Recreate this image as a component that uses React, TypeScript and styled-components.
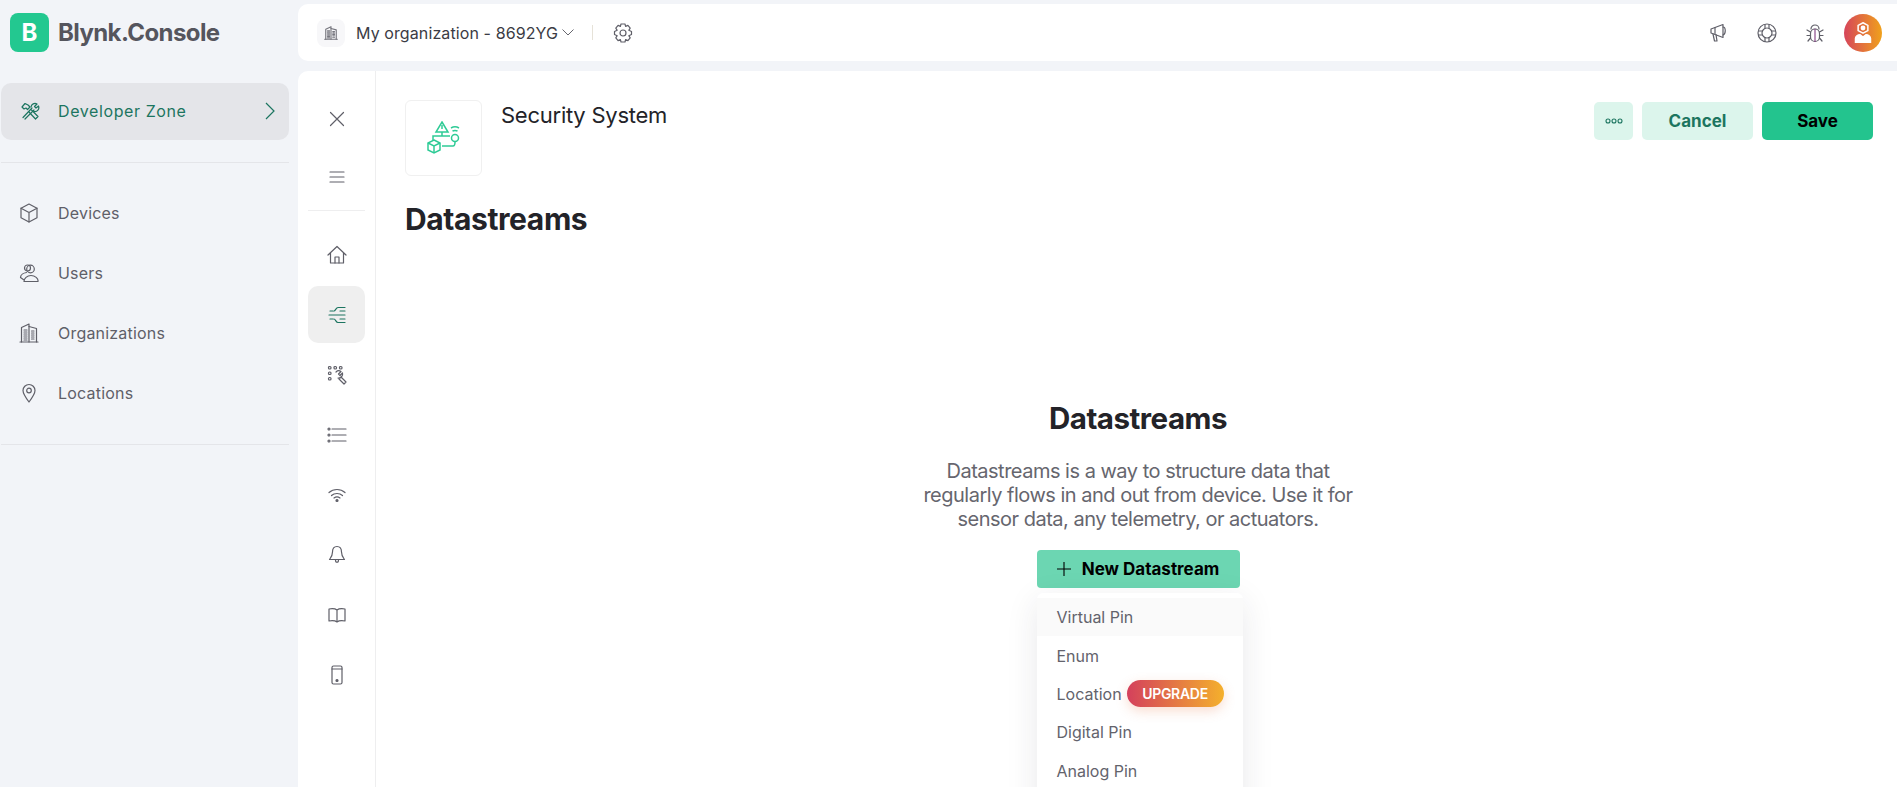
import React from "react";
import styled, { createGlobalStyle } from "styled-components";

const Global = createGlobalStyle`
  html, body { margin: 0; padding: 0; height: 100%; overflow: hidden; background: #f2f4f8; }
  body { font-family: Inter, "Liberation Sans", sans-serif; color: #232328; }
  #root { height: 100%; }
  * { box-sizing: border-box; }
`;

const Page = styled.div`
  display: flex;
  width: 1897px;
  height: 787px;
  overflow: hidden;
`;
const Sidebar = styled.aside`
  width: 298px;
  flex: none;
  display: flex;
  flex-direction: column;
`;
const Brand = styled.div`
  display: flex;
  align-items: center;
  gap: 9px;
  height: 39px;
  margin: 13px 0 31px 10px;
`;
const BrandMark = styled.div`
  width: 39px;
  height: 39px;
  border-radius: 8px;
  background: #23c890;
  color: #fff;
  font-size: 24px;
  font-weight: 700;
  display: flex;
  align-items: center;
  justify-content: center;
`;
const BrandName = styled.div`
  font-size: 24px;
  font-weight: 700;
  letter-spacing: -0.6px;
  color: #55555d;
`;
const ZoneRow = styled.div`
  margin-left: 1px;
  width: 288px;
  height: 57px;
  border-radius: 10px;
  background: #e4e5e9;
  display: flex;
  align-items: center;
  padding: 0 13px 2px 19px;
  gap: 18px;
  color: #1c7560;
  font-size: 16px;
  font-weight: 400;
  letter-spacing: 0.6px;
  span { flex: 1; }
`;
const SideRule = styled.div<{ $top: number }>`
  margin: ${(p) => p.$top}px 9px 0 1px;
  height: 1px;
  background: #e4e5e9;
`;
const SideList = styled.nav`
  display: flex;
  flex-direction: column;
  margin-top: 20px;
`;
const SideItem = styled.div`
  height: 60px;
  display: flex;
  align-items: center;
  padding-left: 19px;
  gap: 19px;
  font-size: 16px;
  letter-spacing: 0.2px;
  color: #5f5f68;
`;
const Right = styled.div`
  flex: 1;
  min-width: 0;
  display: flex;
  flex-direction: column;
  padding-top: 4px;
  gap: 10px;
`;
const TopBar = styled.header`
  height: 57px;
  flex: none;
  background: #fff;
  border-radius: 10px 0 0 10px;
  display: flex;
  align-items: center;
  padding: 0 15px 0 19px;
`;
const OrgBadge = styled.div`
  width: 28px;
  height: 28px;
  border-radius: 8px;
  background: #f7f7f9;
  display: flex;
  align-items: center;
  justify-content: center;
  margin-right: 11px;
`;
const OrgName = styled.div`
  font-size: 16px;
  color: #3b3b44;
  letter-spacing: 0.1px;
`;
const Pipe = styled.div`
  width: 1px;
  height: 15px;
  background: #e6e2d8;
  margin: 0 20px 0 18px;
`;
const TopActions = styled.div`
  margin-left: auto;
  display: flex;
  align-items: center;
  gap: 28px;
`;
const Avatar = styled.div`
  width: 38px;
  height: 38px;
  border-radius: 50%;
  background: linear-gradient(90deg, #d6455a, #f0a11c);
  display: flex;
  align-items: center;
  justify-content: center;
  margin-left: -9px;
`;
const Panel = styled.main`
  flex: 1;
  min-height: 0;
  background: #fff;
  border-radius: 10px 0 0 0;
  display: flex;
`;
const Rail = styled.div`
  width: 78px;
  flex: none;
  border-right: 1px solid #eeeeef;
  display: flex;
  flex-direction: column;
  align-items: center;
  padding-top: 19px;
`;
const RailTop = styled.div`
  width: 57px;
  height: 58px;
  display: flex;
  align-items: center;
  justify-content: center;
`;
const RailRule = styled.div`
  width: 57px;
  height: 1px;
  background: #eeeeef;
  margin: 4px 0 15px;
`;
const RailItem = styled.div<{ $active?: boolean }>`
  width: 57px;
  height: 57px;
  margin-bottom: 3px;
  flex: none;
  border-radius: 10px;
  background: ${(p) => (p.$active ? "#efefef" : "transparent")};
  display: flex;
  align-items: center;
  justify-content: center;
`;
const Content = styled.div`
  flex: 1;
  min-width: 0;
  padding: 29px 24px 0 29px;
  display: flex;
  flex-direction: column;
`;
const HeadRow = styled.div`
  display: flex;
  align-items: flex-start;
`;
const Tile = styled.div`
  width: 77px;
  height: 76px;
  border: 1px solid #f0f0f0;
  border-radius: 6px;
  display: flex;
  align-items: center;
  justify-content: center;
  margin-right: 19px;
`;
const ProductName = styled.div`
  font-size: 22px;
  line-height: 24px;
  letter-spacing: -0.25px;
  margin-top: 3px;
  color: #232328;
  flex: 1;
`;
const Actions = styled.div`
  display: flex;
  gap: 9px;
  margin-top: 2px;
`;
const Btn = styled.button<{ $kind: "soft" | "solid" | "more" }>`
  width: ${(p) => (p.$kind === "more" ? "39px" : "111px")};
  height: 38px;
  border: 0;
  border-radius: 5px;
  font-family: inherit;
  font-size: 17px;
  font-weight: 700;
  display: flex;
  align-items: center;
  justify-content: center;
  background: ${(p) => (p.$kind === "solid" ? "#23c48e" : "#dcf5ec")};
  color: ${(p) => (p.$kind === "solid" ? "#000" : "#1c7560")};
`;
const PageTitle = styled.h1`
  margin: 25px 0 0;
  font-size: 30px;
  line-height: 36px;
  font-weight: 700;
  color: #232328;
  letter-spacing: -0.4px;
`;
const Empty = styled.section`
  margin-top: 163px;
  display: flex;
  flex-direction: column;
  align-items: center;
  padding-right: 2px;
`;
const EmptyTitle = styled.h2`
  margin: 0;
  font-size: 29.5px;
  line-height: 36px;
  font-weight: 700;
  color: #232328;
  letter-spacing: -0.5px;
`;
const EmptyText = styled.p`
  margin: 23px 0 0;
  width: 440px;
  font-size: 20px;
  line-height: 24px;
  letter-spacing: -0.5px;
  text-align: center;
  color: #66666e;
`;
const AddWrap = styled.div`
  position: relative;
  margin-top: 19px;
`;
const AddBtn = styled.button`
  width: 203px;
  height: 38px;
  border: 0;
  border-radius: 4px;
  background: #6cd6b2;
  font-family: inherit;
  font-size: 17px;
  font-weight: 700;
  color: #000;
  display: flex;
  align-items: center;
  justify-content: center;
  gap: 11px;
`;
const Menu = styled.div`
  position: absolute;
  top: 43px;
  left: 0;
  width: 206px;
  height: 240px;
  padding-top: 5px;
  background: #fff;
  border-radius: 6px;
  box-shadow: 0 8px 32px rgba(40, 40, 60, 0.1);
`;
const MenuItem = styled.div<{ $hover?: boolean }>`
  height: 38.4px;
  display: flex;
  align-items: center;
  padding-left: 20px;
  font-size: 16px;
  color: #63636c;
  background: ${(p) => (p.$hover ? "#fafafa" : "#fff")};
`;
const Upgrade = styled.span`
  position: absolute;
  left: 90px;
  top: 87px;
  width: 97px;
  height: 27px;
  border-radius: 14px;
  background: linear-gradient(90deg, #d4405c, #f4b02c);
  box-shadow: 0 4px 12px rgba(230, 120, 70, 0.25);
  color: #fff;
  font-size: 14px;
  font-weight: 600;
  letter-spacing: -0.3px;
  display: flex;
  align-items: center;
  justify-content: center;
`;

const Ico: React.FC<{ s?: number; c?: string; w?: number; children: React.ReactNode }> = ({ s = 20, c = "#5f5f68", w = 1.2, children }) => (
  <svg width={s} height={s} viewBox="0 0 20 20" fill="none" stroke={c} strokeWidth={w} strokeLinecap="round" strokeLinejoin="round">
    {children}
  </svg>
);

const buildingIcon = (
  <>
    <path d="M1 19h18" />
    <path d="M2.500 19V4.500L10 1v18" />
    <path d="M10 3.500l7.500 2V19" />
    <path d="M5 7h3M5 9h3M5 11h3M5 13h3M5 15h3M5 17h3M12.500 8h2.500M12.500 10h2.500M12.500 12h2.500M12.500 14h2.500M12.500 16h2.500" />
  </>
);

export default function App() {
  return (
    <Page>
      <Global />
      <Sidebar>
        <Brand>
          <BrandMark>B</BrandMark>
          <BrandName>Blynk.Console</BrandName>
        </Brand>
        <ZoneRow>
          <Ico c="#1c7560">
            <path d="M3 16.500L12 7M5 18l9-9" />
            <path d="M11 6a4 4 0 0 1 6-3l-2.500 2.500 1.500 1.500L18.500 5a4 4 0 0 1-4.500 5.500" />
            <path d="M2 6l3-3.500 3 1.500 2 2-2.500 2.500L6 7 4 8z" />
            <path d="M9 11l6.500 7 2.500-2.500L11.500 9" />
          </Ico>
          <span>Developer Zone</span>
          <svg width="12" height="18" viewBox="0 0 12 18" fill="none" stroke="#1c7560" strokeWidth="1.200"><path d="M2 1l8 8-8 8" /></svg>
        </ZoneRow>
        <SideRule $top={22} />
        <SideList>
          <SideItem>
            <Ico>
              <path d="M10 1l8 4.200v9.600L10 19l-8-4.200V5.200z" />
              <path d="M2 5.200l8 4.300 8-4.300M10 9.500V19" />
            </Ico>
            Devices
          </SideItem>
          <SideItem>
            <Ico>
              <circle cx="11.500" cy="6" r="3.800" />
              <circle cx="8.500" cy="5" r="3" />
              <path d="M1.500 14.500c0-2.500 3-4.500 6-5M5 18.500h14c.5-3-3-6-7-6s-7 3-7 6zM1.500 14.500L5 17" />
            </Ico>
            Users
          </SideItem>
          <SideItem>
            <Ico>{buildingIcon}</Ico>
            Organizations
          </SideItem>
          <SideItem>
            <Ico>
              <path d="M10 19c-3-4-6-8-6-11.500a6 6 0 0 1 12 0C16 11 13 15 10 19z" />
              <circle cx="10" cy="7.500" r="2.300" />
            </Ico>
            Locations
          </SideItem>
        </SideList>
        <SideRule $top={21} />
      </Sidebar>
      <Right>
        <TopBar>
          <OrgBadge>
            <Ico s={14} c="#77777f" w={1.600}>{buildingIcon}</Ico>
          </OrgBadge>
          <OrgName>My organization - 8692YG</OrgName>
          <svg style={{ marginLeft: 4 }} width="12" height="7" viewBox="0 0 12 7" fill="none" stroke="#66666e" strokeWidth="1"><path d="M.5.500L6 6 11.500.500" /></svg>
          <Pipe />
          <Ico>
            <path d="M8 1h4l.6 2.400 2.300-1 2.300 2.800-1.400 2.100 2.700 1.200v3l-2.700 1.200 1.400 2.100-2.300 2.800-2.300-1L12 19H8l-.6-2.400-2.300 1-2.300-2.800 1.400-2.100L1.500 11.500v-3l2.700-1.200L2.800 5.200l2.300-2.800 2.300 1z" />
            <circle cx="10" cy="10" r="3" />
          </Ico>
          <TopActions>
            <Ico>
              <path d="M2 6l12-4.500v13L2 10z" />
              <path d="M14 4c3 0 3 7 0 8M4 11l1.500 7h2.500L7 11.500" />
              <path d="M6 4.500v6" />
            </Ico>
            <Ico>
              <circle cx="10" cy="10" r="9" />
              <circle cx="10" cy="10" r="5" />
              <path d="M8 1.500v4M12 1.500v4M8 14.500v4M12 14.500v4M1.500 8h4M1.500 12h4M14.500 8h4M14.500 12h4" />
            </Ico>
            <Ico>
              <path d="M6 6a4 4 0 0 1 8 0" />
              <rect x="5.500" y="6" width="9" height="12.500" rx="4.500" />
              <path d="M10 6v12.500" stroke="#8a4a8a" />
              <path d="M5.500 9L2 7M5.500 12.500H2M5.500 15L3 18M14.500 9L18 7M14.500 12.500H18M14.500 15l2.500 3" />
            </Ico>
            <Avatar>
              <svg width="18" height="21" viewBox="0 0 24 28" fill="none" stroke="#fff" strokeWidth="2">
                <path d="M12 1l6.500 3.500v7L12 15l-6.500-3.500v-7z" />
                <circle cx="12" cy="8" r="2.200" fill="#fff" />
                <path d="M2 27v-5c0-3 3-5 6-5l4 3 4-3c3 0 6 2 6 5v5z" fill="#fff" />
              </svg>
            </Avatar>
          </TopActions>
        </TopBar>
        <Panel>
          <Rail>
            <RailTop>
              <Ico>
                <path d="M3.500 3.500l13 13M16.500 3.500l-13 13" />
              </Ico>
            </RailTop>
            <RailTop>
              <Ico>
                <path d="M3 5h14M3 10h14M3 15h14" />
              </Ico>
            </RailTop>
            <RailRule />
            <RailItem>
              <Ico>
                <path d="M1 10L10 1.500 19 10M3.500 8V18h13V8" />
                <path d="M8 18v-6h4v6" />
              </Ico>
            </RailItem>
            <RailItem $active>
              <Ico c="#1c7560">
                <path d="M2 10h16M11 2.500h7M11 17.500h7M7 6c1.500 0 2-3.500 4-3.500M7 14c1.500 0 2 3.500 4 3.500M3 6h3M3 14h3M13 6h5M13 14h5" />
              </Ico>
            </RailItem>
            <RailItem>
              <Ico>
                <rect x="1.500" y="1.500" width="2.500" height="2.500" rx="1" />
                <rect x="7" y="1.500" width="2.500" height="2.500" rx="1" />
                <rect x="12.500" y="1.500" width="2.500" height="2.500" rx="1" />
                <rect x="1.500" y="7" width="2.500" height="2.500" rx="1" />
                <rect x="1.500" y="12.500" width="2.500" height="2.500" rx="1" />
                <path d="M9 7a4 4 0 0 1 5-.500L11.500 9 13 10.500l2.500-2.500A4 4 0 0 1 11 13M14 12l5 5-2 2-5-5" />
              </Ico>
            </RailItem>
            <RailItem>
              <Ico>
                <path d="M5 4h14M5 10h14M5 16h14" />
                <circle cx="2" cy="4" r="1" />
                <circle cx="2" cy="10" r="1" />
                <circle cx="2" cy="16" r="1" />
              </Ico>
            </RailItem>
            <RailItem>
              <Ico>
                <path d="M2 7.500c4.500-4 11.500-4 16 0M4.500 10.500c3-2.700 8-2.700 11 0M7 13c1.700-1.300 4.300-1.300 6 0" />
                <circle cx="10" cy="15.500" r="1" fill="#5f5f68" />
              </Ico>
            </RailItem>
            <RailItem>
              <Ico>
                <path d="M10 1.500c3 0 4.500 2.500 4.500 5.500 0 4 2 6 3 7.500h-15c1-1.500 3-3.500 3-7.500 0-3 1.500-5.500 4.500-5.500z" />
                <path d="M8.500 15c0 3 3 3 3 0" />
              </Ico>
            </RailItem>
            <RailItem>
              <Ico>
                <path d="M10 5c-2-1.500-5-1.500-8-1v12c3-.5 6-.5 8 1 2-1.500 5-1.500 8-1V4c-3-.5-6-.5-8 1zM10 5v12" />
              </Ico>
            </RailItem>
            <RailItem>
              <Ico>
                <rect x="5" y="1" width="10" height="18" rx="1.500" />
                <path d="M5 4h10" />
                <circle cx="10" cy="15.500" r="1" fill="#5f5f68" />
              </Ico>
            </RailItem>
          </Rail>
          <Content>
            <HeadRow>
              <Tile>
                <svg width="34" height="34" viewBox="0 0 34 34" fill="none" stroke="#2fcb96" strokeWidth="1.500">
                  <path d="M15 1l6 10H9z" />
                  <path d="M15 4v4" />
                  <path d="M6 19v-4h17M15 11v4" />
                  <circle cx="28" cy="17" r="3.500" />
                  <path d="M24 7c2.500-1.500 5.500-1.500 8 0M25.500 10c1.500-.7 3.500-.7 5 0" />
                  <path d="M7 19l6 3v7l-6 3-6-3v-7z" />
                  <path d="M1 22l6 3 6-3M7 25v7" />
                  <path d="M15 25h11c2 0 2-2 2-4" />
                </svg>
              </Tile>
              <ProductName>Security System</ProductName>
              <Actions>
                <Btn $kind="more">
                  <svg width="18" height="6" viewBox="0 0 18 6" fill="none" stroke="#1c7560" strokeWidth="1.100">
                    <circle cx="3" cy="3" r="2" />
                    <circle cx="9" cy="3" r="2" />
                    <circle cx="15" cy="3" r="2" />
                  </svg>
                </Btn>
                <Btn $kind="soft">Cancel</Btn>
                <Btn $kind="solid">Save</Btn>
              </Actions>
            </HeadRow>
            <PageTitle>Datastreams</PageTitle>
            <Empty>
              <EmptyTitle>Datastreams</EmptyTitle>
              <EmptyText>Datastreams is a way to structure data that regularly flows in and out from device. Use it for sensor data, any telemetry, or actuators.</EmptyText>
              <AddWrap>
                <AddBtn>
                  <svg width="14" height="14" viewBox="0 0 14 14" stroke="#000" strokeWidth="1.100"><path d="M7 0v14M0 7h14" /></svg>
                  New Datastream
                </AddBtn>
                <Menu>
                  <MenuItem $hover>Virtual Pin</MenuItem>
                  <MenuItem>Enum</MenuItem>
                  <MenuItem>Location</MenuItem>
                  <MenuItem>Digital Pin</MenuItem>
                  <MenuItem>Analog Pin</MenuItem>
                  <Upgrade>UPGRADE</Upgrade>
                </Menu>
              </AddWrap>
            </Empty>
          </Content>
        </Panel>
      </Right>
    </Page>
  );
}
